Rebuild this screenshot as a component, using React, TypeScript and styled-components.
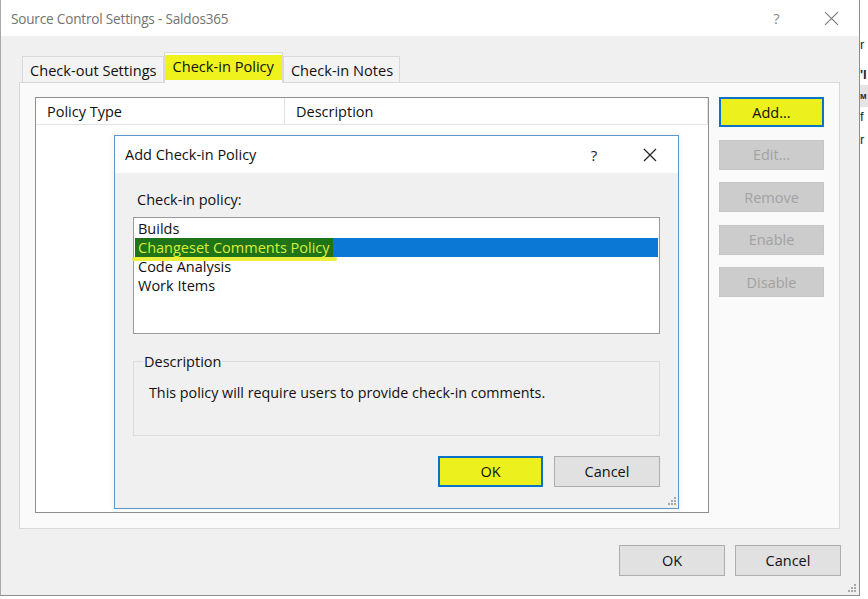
import React from "react";
import styled, { createGlobalStyle, css } from "styled-components";

const GlobalStyle = createGlobalStyle`
  html, body { margin: 0; padding: 0; background: #ffffff; }
  body {
    font-family: "Open Sans", "Noto Sans", "Liberation Sans", sans-serif;
    font-size: 14.5px;
    color: #1a1a1a;
  }
  * { box-sizing: border-box; }
`;

const Page = styled.div`
  width: 868px;
  height: 599px;
  display: flex;
  overflow: hidden;
  background: #ffffff;
`;

const Window = styled.div`
  position: relative;
  flex: none;
  width: 860px;
  height: 596px;
  display: flex;
  flex-direction: column;
  background: #f0f0f0;
  border: 1px solid #8e8e8e;
  border-top: none;
  border-left-color: #a8a8a8;
`;

const TitleBar = styled.div`
  height: 36px;
  flex: none;
  display: flex;
  align-items: center;
  background: #ffffff;
  padding-left: 10px;
`;

const TitleText = styled.div`
  flex: 1;
  font-size: 13.6px;
  color: #737373;
  letter-spacing: -0.2px;
`;

const CaptionButton = styled.div<{ $w: number; $color: string }>`
  width: ${(p) => p.$w}px;
  height: 100%;
  display: flex;
  align-items: center;
  justify-content: center;
  color: ${(p) => p.$color};
  font-size: 15px;
`;

const Body = styled.div`
  flex: 1;
  display: flex;
  flex-direction: column;
  padding: 16px 17px 0 18px;
`;

const TabRow = styled.div`
  display: flex;
  align-items: flex-end;
  height: 31px;
  padding-left: 3px;
  position: relative;
  z-index: 2;
  margin-bottom: -1px;
`;

const Tab = styled.div<{ $active?: boolean; $marked?: boolean }>`
  height: 26px;
  display: flex;
  align-items: center;
  padding: 0 6px 0 7px;
  font-size: 14.6px;
  color: #111;
  background: #f3f3f3;
  border: 1px solid #d9d9d9;
  border-bottom: none;
  margin-bottom: 1px;
  ${(p) =>
    p.$active &&
    css`
      height: 31px;
      margin-bottom: 0;
      padding: 0 8px 4px 8px;
      background: #fafafa;
      border-color: #d9d9d9;
    `}
  ${(p) =>
    p.$marked &&
    css`
      background: linear-gradient(#fafafa 0, #fafafa 2px, #f0f21c 2px, #eef21c 27px, #fafafa 27px);
    `}
`;

const Panel = styled.div`
  position: relative;
  height: 447px;
  margin-right: 2px;
  display: flex;
  padding: 14px 15px 15px 15px;
  background: #fafafa;
  border: 1px solid #d9d9d9;
`;

const ListView = styled.div`
  flex: 1;
  display: flex;
  flex-direction: column;
  background: #ffffff;
  border: 1px solid #8f8f8f;
`;

const ListHeader = styled.div`
  height: 27px;
  display: flex;
  border-bottom: 1px solid #e3e3e3;
`;

const HeaderCell = styled.div<{ $w?: number }>`
  ${(p) => (p.$w ? `width: ${p.$w}px; flex: none;` : "flex: 1;")}
  display: flex;
  align-items: center;
  padding-left: 11px;
  font-size: 14.5px;
  color: #111;
  border-right: 1px solid #e3e3e3;
`;

const ButtonColumn = styled.div`
  width: 105px;
  margin-left: 10px;
  display: flex;
  flex-direction: column;
  gap: 12.5px;
`;

type BtnKind = "normal" | "default" | "disabled";

const Button = styled.div<{ $kind?: BtnKind; $marked?: boolean; $w?: number; $h?: number }>`
  width: ${(p) => p.$w ?? 105}px;
  height: ${(p) => p.$h ?? 30}px;
  flex: none;
  display: flex;
  align-items: center;
  justify-content: center;
  font-size: 14.5px;
  color: #111;
  background: #e1e1e1;
  border: 1px solid #adadad;
  ${(p) =>
    p.$kind === "default" &&
    css`
      border: 2px solid #0a72c9;
    `}
  ${(p) =>
    p.$kind === "disabled" &&
    css`
      background: #cccccc;
      border-color: #c6c6c6;
      color: #a2a2a2;
    `}
  ${(p) =>
    p.$marked &&
    css`
      background: #ecf01d;
    `}
`;

const Footer = styled.div`
  display: flex;
  justify-content: flex-end;
  gap: 10px;
  padding-top: 16px;
  padding-right: 1px;
`;

const Grip = styled.svg`
  position: absolute;
  right: 3px;
  bottom: 3px;
`;

/* ---------- inner dialog ---------- */

const Dialog = styled.div`
  position: absolute;
  left: 94px;
  top: 52px;
  width: 565px;
  height: 374px;
  display: flex;
  flex-direction: column;
  border: 1px solid #5b97c8;
  background: #f0f0f0;
  box-shadow: 0 0 6px rgba(0, 0, 0, 0.08);
  z-index: 3;
`;

const DialogTitleBar = styled.div`
  height: 37px;
  flex: none;
  display: flex;
  align-items: center;
  background: #ffffff;
  padding-left: 10px;
`;

const DialogTitle = styled.div`
  flex: 1;
  font-size: 14.5px;
  color: #111;
`;

const DialogBody = styled.div`
  position: relative;
  flex: 1;
  display: flex;
  flex-direction: column;
  padding: 17px 18px 0 18px;
`;

const FieldLabel = styled.div`
  height: 19px;
  line-height: 19px;
  color: #111;
  padding-left: 4px;
`;

const ListBox = styled.div`
  margin-top: 8px;
  height: 117px;
  padding: 1px;
  background: #ffffff;
  border: 1px solid #9a9a9a;
`;

const ListItem = styled.div<{ $selected?: boolean }>`
  height: 19px;
  line-height: 19px;
  padding-left: 3px;
  color: #111;
  ${(p) =>
    p.$selected &&
    css`
      padding-left: 0;
      background: #0a78d4;
    `}
`;

const MarkedText = styled.span`
  position: relative;
  display: inline-block;
  height: 19px;
  padding: 0 3px;
  background: #1f7418;
  color: #d9ef3a;
  &::after {
    content: "";
    position: absolute;
    left: -3px;
    right: -4px;
    bottom: -4px;
    height: 4px;
    border-radius: 2px;
    background: #e8ee26;
    opacity: 0.9;
  }
`;

const Group = styled.fieldset`
  margin: 18px 0 0 0;
  padding: 0 0 33px 15px;
  border: 1px solid #dcdcdc;
  min-width: 0;
`;

const Legend = styled.legend`
  margin-left: -6px;
  padding: 0 1px;
  height: 19px;
  line-height: 19px;
  color: #111;
`;

const GroupText = styled.div`
  margin-top: 12px;
  height: 19px;
  line-height: 19px;
  font-size: 14.3px;
  color: #111;
`;

const DialogButtons = styled.div`
  display: flex;
  justify-content: flex-end;
  gap: 11px;
  margin-top: 20px;
`;

const InnerGrip = styled.svg`
  position: absolute;
  right: 2px;
  bottom: 3px;
`;

/* ---------- backdrop strip ---------- */

const SideStrip = styled.div`
  flex: 1;
  display: flex;
  flex-direction: column;
  padding-top: 35px;
  overflow: hidden;
  font-family: "Liberation Sans", sans-serif;
`;

const Fragment = styled.div<{ $h: number; $mt?: number; $bold?: boolean; $bg?: string; $size?: number }>`
  height: ${(p) => p.$h}px;
  margin-top: ${(p) => p.$mt ?? 0}px;
  line-height: ${(p) => p.$h}px;
  font-size: ${(p) => p.$size ?? 13}px;
  white-space: nowrap;
  color: #2a2a2a;
  font-weight: ${(p) => (p.$bold ? 700 : 400)};
  background: ${(p) => p.$bg ?? "transparent"};
`;

const CloseIcon = ({ size, color, stroke }: { size: number; color: string; stroke: number }) => (
  <svg width={size} height={size} viewBox="0 0 14 14">
    <path d="M1 1 L13 13 M13 1 L1 13" stroke={color} strokeWidth={stroke} fill="none" />
  </svg>
);

const GripDots = ({ color }: { color: string }) => (
  <>
    {[
      [7, 1],
      [7, 4],
      [4, 4],
      [7, 7],
      [4, 7],
      [1, 7],
    ].map(([x, y], i) => (
      <rect key={i} x={x} y={y} width={2} height={2} fill={color} />
    ))}
  </>
);

export default function App() {
  const policies = ["Builds", "Changeset Comments Policy", "Code Analysis", "Work Items"];
  return (
    <>
      <GlobalStyle />
      <Page>
        <Window>
          <TitleBar>
            <TitleText>Source Control Settings - Saldos365</TitleText>
            <CaptionButton $w={55} $color="#8a8a8a">?</CaptionButton>
            <CaptionButton $w={55} $color="#8a8a8a">
              <CloseIcon size={15} color="#7a7a7a" stroke={1.1} />
            </CaptionButton>
          </TitleBar>
          <Body>
            <TabRow>
              <Tab>Check-out Settings</Tab>
              <Tab $active $marked>
                Check-in Policy
              </Tab>
              <Tab>Check-in Notes</Tab>
            </TabRow>
            <Panel>
              <ListView>
                <ListHeader>
                  <HeaderCell $w={249}>Policy Type</HeaderCell>
                  <HeaderCell>Description</HeaderCell>
                </ListHeader>
              </ListView>
              <ButtonColumn>
                <Button $kind="default" $marked>
                  Add...
                </Button>
                <Button $kind="disabled">Edit...</Button>
                <Button $kind="disabled">Remove</Button>
                <Button $kind="disabled">Enable</Button>
                <Button $kind="disabled">Disable</Button>
              </ButtonColumn>

              <Dialog>
                <DialogTitleBar>
                  <DialogTitle>Add Check-in Policy</DialogTitle>
                  <CaptionButton $w={56} $color="#222">?</CaptionButton>
                  <CaptionButton $w={56} $color="#222">
                    <CloseIcon size={14} color="#222" stroke={1.2} />
                  </CaptionButton>
                </DialogTitleBar>
                <DialogBody>
                  <FieldLabel>Check-in policy:</FieldLabel>
                  <ListBox>
                    {policies.map((p, i) =>
                      i === 1 ? (
                        <ListItem key={p} $selected>
                          <MarkedText>{p}</MarkedText>
                        </ListItem>
                      ) : (
                        <ListItem key={p}>{p}</ListItem>
                      )
                    )}
                  </ListBox>
                  <Group>
                    <Legend>Description</Legend>
                    <GroupText>This policy will require users to provide check-in comments.</GroupText>
                  </Group>
                  <DialogButtons>
                    <Button $kind="default" $marked $w={105} $h={31}>
                      OK
                    </Button>
                    <Button $w={106} $h={31}>
                      Cancel
                    </Button>
                  </DialogButtons>
                  <InnerGrip width={9} height={9} viewBox="0 0 9 9">
                    <GripDots color="#a9a9a9" />
                  </InnerGrip>
                </DialogBody>
              </Dialog>
            </Panel>
            <Footer>
              <Button $w={106} $h={31}>
                OK
              </Button>
              <Button $w={106} $h={31}>
                Cancel
              </Button>
            </Footer>
          </Body>
          <Grip width={9} height={9} viewBox="0 0 9 9">
            <GripDots color="#a9a9a9" />
          </Grip>
        </Window>
        <SideStrip>
          <Fragment $h={20}>r</Fragment>
          <Fragment $h={20} $mt={10} $bold>
            'I
          </Fragment>
          <Fragment $h={22} $bold $bg="#e4e4e4" $size={9}>
            ᴍ
          </Fragment>
          <Fragment $h={20}>f</Fragment>
          <Fragment $h={26}>r</Fragment>
        </SideStrip>
      </Page>
    </>
  );
}
